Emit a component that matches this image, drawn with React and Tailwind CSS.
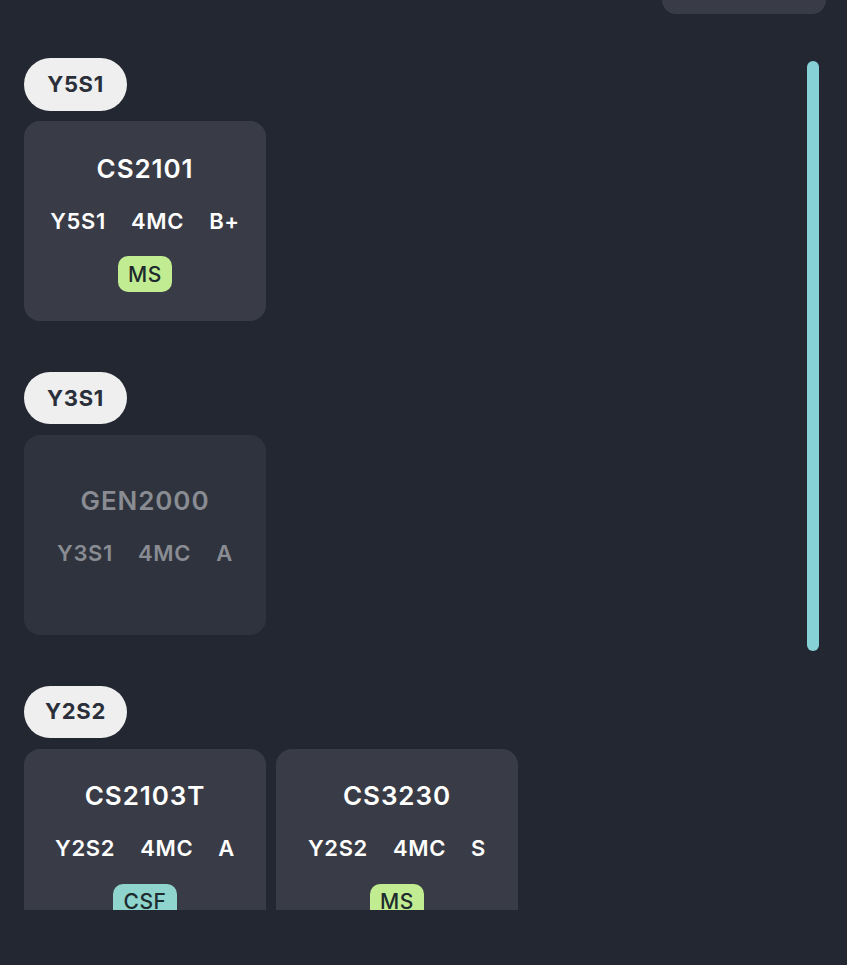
import React from "react";

const groups = [
  {
    sem: "Y5S1",
    mods: [{ code: "CS2101", sem: "Y5S1", mc: "4MC", grade: "B+", tags: [{ label: "MS", tone: "green" }] }],
  },
  {
    sem: "Y3S1",
    mods: [{ code: "GEN2000", sem: "Y3S1", mc: "4MC", grade: "A", dim: true, tags: [] }],
  },
  {
    sem: "Y2S2",
    mods: [
      { code: "CS2103T", sem: "Y2S2", mc: "4MC", grade: "A", tags: [{ label: "CSF", tone: "teal" }] },
      { code: "CS3230", sem: "Y2S2", mc: "4MC", grade: "S", tags: [{ label: "MS", tone: "green" }] },
    ],
  },
];

function Tag({ label, tone }) {
  return (
    <span
      className={`h-9 px-[10px] rounded-[10px] flex items-center text-[21px] font-medium tracking-[0.03em] text-[#1d2a2e] ${
        tone === "green" ? "bg-[#c1ec91]" : "bg-[#8fd4cd]"
      }`}
    >
      {label}
    </span>
  );
}

function ModuleCard({ mod }) {
  return (
    <div
      className={`w-[242px] h-[200px] shrink-0 rounded-2xl flex flex-col items-center justify-center gap-5 ${
        mod.dim ? "bg-[#2f333d] text-[#898c92]" : "bg-[#393c46] text-white"
      }`}
    >
      <div className="h-9 flex items-center text-[26px] font-semibold tracking-[0.035em]">{mod.code}</div>
      <div className="h-[30px] flex items-center gap-[25px] text-[22px] font-semibold tracking-[0.03em]">
        <span>{mod.sem}</span>
        <span>{mod.mc}</span>
        <span>{mod.grade}</span>
      </div>
      <div className="flex gap-2">
        {mod.tags.map((t) => (
          <Tag key={t.label} {...t} />
        ))}
      </div>
    </div>
  );
}

export default function App() {
  return (
    <div
      className="w-[847px] h-[965px] bg-[#222731] flex flex-col overflow-hidden"
      style={{ fontFamily: "Inter, 'Noto Sans', sans-serif" }}
    >
      {/* top action button, mostly scrolled away */}
      <div className="h-[14px] flex justify-end pr-[21px] shrink-0">
        <div className="w-[164px] h-[14px] bg-[#393c46] rounded-b-2xl" />
      </div>

      <div className="h-[896px] flex shrink-0 overflow-hidden">
        <div className="flex-1 pl-6 pt-[44px] flex flex-col gap-[50.5px]">
          {groups.map((g) => (
            <section key={g.sem} className="flex flex-col items-start gap-[10.75px]">
              <div className="w-[103px] h-[52.5px] rounded-full bg-[#efefef] text-[#2a2f3a] text-[22px] font-bold tracking-[0.03em] flex items-center justify-center">
                {g.sem}
              </div>
              <div className="flex gap-[10px]">
                {g.mods.map((m) => (
                  <ModuleCard key={m.code} mod={m} />
                ))}
              </div>
            </section>
          ))}
        </div>

        {/* scrollbar */}
        <div className="w-3 mr-[28px] shrink-0 pt-[47px]">
          <div className="w-3 h-[590px] rounded-full bg-[#85d1d5]" />
        </div>
      </div>
    </div>
  );
}
